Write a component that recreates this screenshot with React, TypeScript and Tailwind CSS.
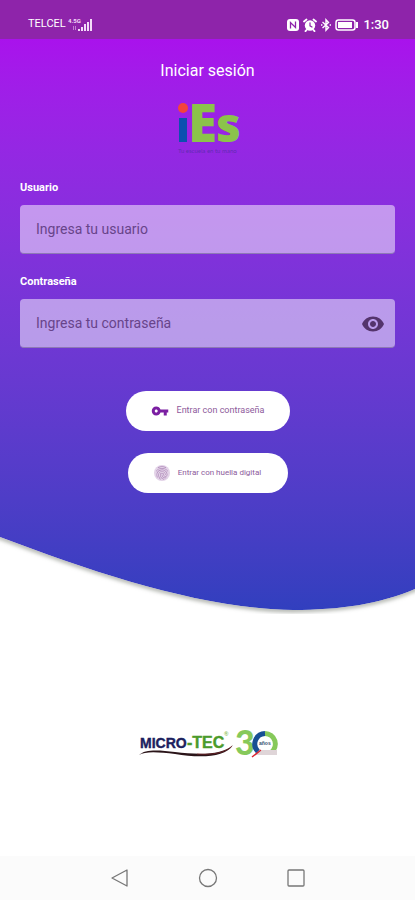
import React, { useState } from 'react';
import { MdFingerprint, MdVisibility, MdVpnKey } from 'react-icons/md';

const StatusBar = () => (
  <header className="flex h-[39px] items-center justify-between bg-[#8e24aa] pt-2.5 pr-[26px] pl-7 text-white">
    <div className="flex items-center gap-0.5">
      <span className="text-[11px]">TELCEL</span>
      <svg className="h-4 w-6" viewBox="0 0 24 16" fill="#f3dcf8">
        <text x="0" y="6" fontSize="6" fontWeight="700" fontFamily="Roboto, sans-serif">4.5G</text>
        <path d="M5 9h1v4H5zM7 9h1v4H7z" opacity="0.5" />
        <path d="M10 12h2v2h-2zM13 10h2v4h-2zM16 7h2v7h-2zM19 5h2v9h-2zM22 2h2v12h-2z" />
      </svg>
    </div>
    <div className="flex items-center gap-1">
      <svg className="h-3 w-3" viewBox="0 0 12 12">
        <rect width="12" height="12" rx="3" fill="#fff" />
        <path d="M3.5 9.5v-6l5 5v-6" fill="none" stroke="#8e24aa" strokeWidth="1.3" />
      </svg>
      <svg className="h-[14px] w-[14px]" viewBox="0 0 14 14" fill="none" stroke="#fff" strokeLinecap="round">
        <circle cx="7" cy="7.5" r="5.2" fill="#fff" stroke="none" />
        <path d="M1 3.5l2.5-2M13 3.5l-2.5-2M3.5 12l-1 1.2M10.5 12l1 1.2" strokeWidth="1.8" />
        <path d="M7 4.8v3l2 1.2" stroke="#8e24aa" strokeWidth="1.2" />
      </svg>
      <svg className="h-[14px] w-[10px]" viewBox="0 0 10 14" fill="none" stroke="#fff" strokeWidth="1.4">
        <path d="M1.5 4l6 5.5L5 12.2V1.8l2.5 2.7-6 5.5" />
        <path d="M0 7h1.4M8.6 7H10" />
      </svg>
      <svg className="h-3 w-6" viewBox="0 0 24 12" fill="none" stroke="#fff">
        <rect x="1" y="1" width="19" height="10" rx="2.5" strokeWidth="1.5" />
        <rect x="3" y="3" width="14" height="6" fill="#fff" stroke="none" />
        <path d="M22 3v6" strokeWidth="2" />
      </svg>
      <span className="text-[13px] font-medium">1:30</span>
    </div>
  </header>
);

const IesLogo = () => (
  <svg className="h-16 w-[68px] overflow-visible" viewBox="0 0 68 64" role="img" aria-label="iEs">
    <circle cx="9" cy="17" r="5" fill="#f4433c" />
    <rect x="5" y="27" width="8" height="24" fill="#0b50b0" />
    <g fill="#8bc34a" fontWeight="800" fontFamily="Open Sans, sans-serif">
      <text x="14" y="51" fontSize="53">E</text>
      <text x="42" y="51" fontSize="48">s</text>
    </g>
    <text x="4" y="62" fill="#3b2f8f" fillOpacity="0.6" fontSize="6" fontFamily="Lato, sans-serif">
      Tu escuela en tu mano
    </text>
  </svg>
);

const MicroTecLogo = () => (
  <svg className="h-12 w-[142px]" viewBox="0 0 142 48" role="img" aria-label="Micro-Tec 30 años">
    <g fontFamily="Liberation Sans, sans-serif" fontWeight="700">
      <text x="3" y="29" fontSize="14" fill="#1c1f5e" stroke="#1c1f5e" strokeWidth="0.4">MICRO</text>
      <text x="50" y="29" fontSize="16" fill="#4b9b2b" stroke="#4b9b2b" strokeWidth="0.4">-TEC</text>
      <text x="87" y="17" fontSize="6" fill="#8bbf5a">®</text>
    </g>
    <path d="M2 36C8 30 22 31 38 33C62 36 86 36 96 26C88 39 62 39 38 35C22 33 8 32 2 36z" fill="#2a1418" />
    <path d="M60 35C76 36 88 34 95 27" fill="none" stroke="#8c2a2e" strokeWidth="0.6" />
    <text x="98" y="36" fontSize="34" fontWeight="900" fontFamily="Lato, sans-serif" fill="#86c95a">3</text>
    <path d="M128 14.500a10.500 10.500 0 0 1 6 19" fill="none" stroke="#86c95a" strokeWidth="5" />
    <path d="M128 14.500a10.500 10.500 0 0 0-7 18" fill="none" stroke="#174f94" strokeWidth="5" />
    <path d="M118 35l7-4h15v5h-22z" fill="#dfd5d8" />
    <path d="M115 38l9-7" stroke="#d8232f" strokeWidth="1.5" />
    <text x="122" y="26" fontSize="5" fontWeight="700" fontFamily="Liberation Sans, sans-serif" fill="#38506e">años</text>
  </svg>
);

const Wave = () => (
  <svg className="block h-20 w-full" viewBox="0 0 415 80" preserveAspectRatio="none">
    <defs>
      <clipPath id="below">
        <path d="M0 3C100 41 205 75 293 76C340 76 380 70 415 55V80H0z" />
      </clipPath>
      <filter id="soft" x="-5%" y="-20%" width="110%" height="140%">
        <feGaussianBlur stdDeviation="2" />
      </filter>
    </defs>
    <g clipPath="url(#below)">
      <rect width="415" height="80" fill="#fff" />
      <path
        d="M-10 0L0 3C100 41 205 75 293 76C340 76 380 70 415 55L425 50"
        fill="none"
        stroke="#9da19a"
        strokeWidth="4"
        filter="url(#soft)"
      />
    </g>
  </svg>
);

const App = () => {
  const [showPassword, setShowPassword] = useState(false);

  const labelClass = 'text-[11px] leading-4 font-bold text-white';
  const inputClass =
    'h-[49px] w-full rounded-[4px] border-b border-[#8d78b5] bg-white/50 px-4 text-sm text-[#4a2a70] placeholder:text-[#68448a] outline-none';
  const buttonClass =
    'flex h-10 items-center justify-center rounded-full bg-white text-[#8d5a9b]';

  return (
    <div className="flex min-h-screen flex-col bg-white font-[Roboto,sans-serif]">
      <StatusBar />

      <main className="flex flex-1 flex-col">
        <section className="bg-linear-to-b from-[#a912ec] to-[#303fbe]">
          <form className="flex flex-col px-5 pt-5" onSubmit={(e) => e.preventDefault()}>
            <h1 className="text-center text-base leading-6 text-white">Iniciar sesión</h1>
            <div className="mt-2 flex justify-center">
              <IesLogo />
            </div>

            <label htmlFor="user" className={`mt-[25px] ${labelClass}`}>
              Usuario
            </label>
            <input id="user" type="text" placeholder="Ingresa tu usuario" className={`mt-[9px] ${inputClass}`} />

            <label htmlFor="password" className={`mt-5 ${labelClass}`}>
              Contraseña
            </label>
            <div className="relative mt-[9px]">
              <input
                id="password"
                type={showPassword ? 'text' : 'password'}
                placeholder="Ingresa tu contraseña"
                className={inputClass}
              />
              <button
                type="button"
                aria-label="Mostrar contraseña"
                onClick={() => setShowPassword(!showPassword)}
                className="absolute inset-y-0 right-2.5 flex items-center text-[#54346c]"
              >
                <MdVisibility className="h-6 w-6" />
              </button>
            </div>

            <div className="mt-[43px] flex flex-col items-center gap-[22px]">
              <button type="submit" className={`w-[164px] gap-2 text-[9px] ${buttonClass}`}>
                <MdVpnKey className="h-[18px] w-[18px] text-[#7b1fa2]" />
                Entrar con contraseña
              </button>
              <button type="button" className={`w-40 gap-2 text-[8px] ${buttonClass}`}>
                <span className="flex rounded-full bg-[#e3d3e8]">
                  <MdFingerprint className="h-4 w-4 text-[#b08cba]" />
                </span>
                Entrar con huella digital
              </button>
            </div>
          </form>
          <div className="mt-[41px]">
            <Wave />
          </div>
        </section>

        <div className="flex flex-1 items-center justify-center pt-4">
          <MicroTecLogo />
        </div>
      </main>

      <nav className="flex h-11 items-center justify-center gap-[68px] bg-[#fbfbfb] text-[#777777]">
        <button type="button" aria-label="Atrás">
          <svg className="h-5 w-5" viewBox="0 0 20 20" fill="none" stroke="currentColor" strokeWidth="1.3">
            <path d="M17 2v16L2 10z" strokeLinejoin="round" />
          </svg>
        </button>
        <button type="button" aria-label="Inicio">
          <svg className="h-5 w-5" viewBox="0 0 20 20" fill="none" stroke="currentColor" strokeWidth="1.3">
            <circle cx="10" cy="10" r="8.5" />
          </svg>
        </button>
        <button type="button" aria-label="Recientes">
          <svg className="h-5 w-5" viewBox="0 0 20 20" fill="none" stroke="currentColor" strokeWidth="1.3">
            <rect x="2" y="2" width="16" height="16" rx="1" />
          </svg>
        </button>
      </nav>
    </div>
  );
};

export default App;
